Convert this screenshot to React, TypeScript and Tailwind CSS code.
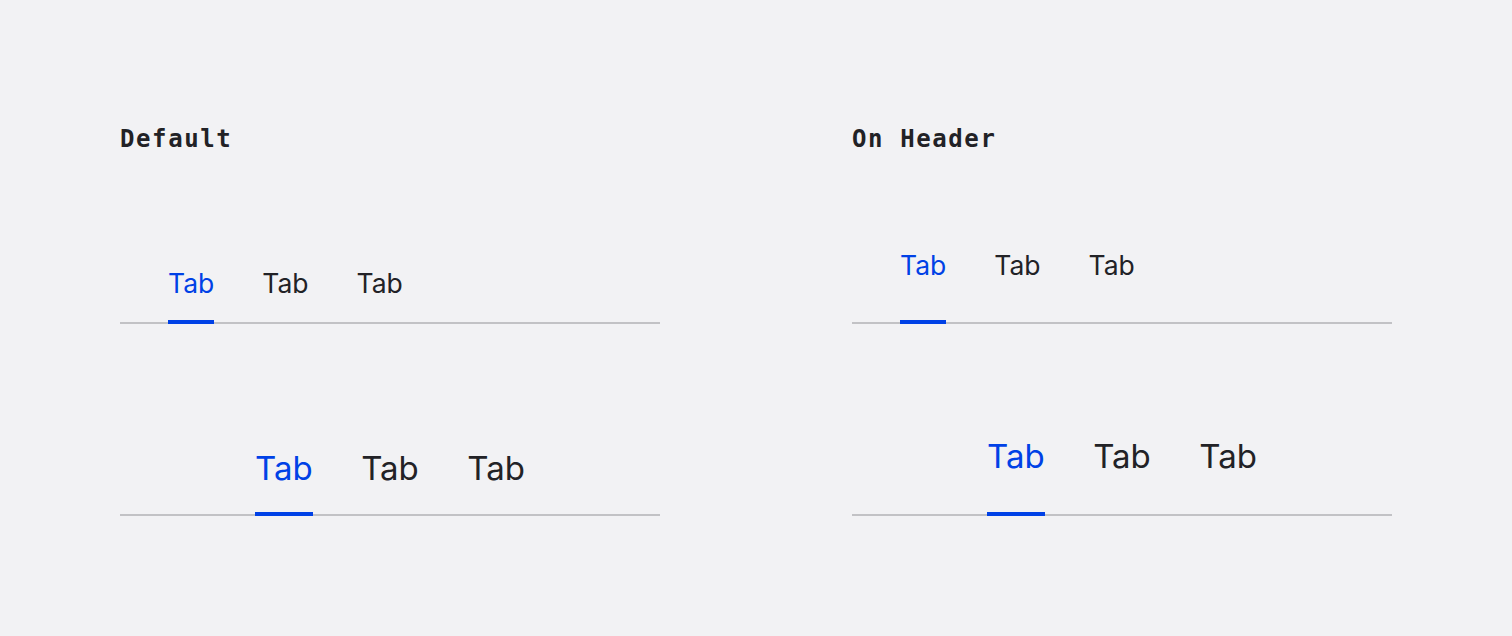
import * as React from "react";

type Size = "md" | "lg";

interface TabBarProps {
  labels: string[];
  active: number;
  size: Size;
  onHeader?: boolean;
}

/** Row of text tabs sitting on a thin rule, active one gets a blue bar. */
function TabBar({ labels, active, size, onHeader = false }: TabBarProps) {
  const lg = size === "lg";
  const textCls = lg
    ? "text-[33px] leading-[40px]"
    : "text-[26.5px] leading-[32px]";
  const padCls = onHeader
    ? lg
      ? "pb-[38px]"
      : "pb-[41px]"
    : lg
      ? "pb-[26px]"
      : "pb-[23px]";

  return (
    <div
      className={`flex border-b-2 border-[#c2c2c5] ${
        lg ? "gap-[48.5px] pl-[135px]" : "gap-[48px] pl-[48px]"
      }`}
    >
      {labels.map((label, i) => {
        const isActive = i === active;
        return (
          <button
            key={i}
            type="button"
            className={`relative ${padCls} ${textCls} font-normal ${
              isActive ? "text-[#0041e6]" : "text-[#222226]"
            }`}
          >
            {label}
            {isActive && (
              <span className="absolute left-0 right-0 -bottom-[2px] h-[4px] bg-[#0041e6]" />
            )}
          </button>
        );
      })}
    </div>
  );
}

function Section({ title, onHeader }: { title: string; onHeader?: boolean }) {
  const tabs = ["Tab", "Tab", "Tab"];
  return (
    <div className="w-[540px] flex flex-col">
      <h2 className="h-[28px] text-[24px] leading-[28px] font-bold tracking-[1.6px] text-[#222226] [font-family:'DejaVu_Sans_Mono',monospace]">
        {title}
      </h2>
      <div className="h-[171px] flex flex-col justify-end">
        <TabBar labels={tabs} active={0} size="md" onHeader={onHeader} />
      </div>
      <div className="h-[192px] flex flex-col justify-end">
        <TabBar labels={tabs} active={0} size="lg" onHeader={onHeader} />
      </div>
    </div>
  );
}

export default function App() {
  return (
    <div className="min-h-[636px] w-full bg-[#f2f2f4] [font-family:Inter,'Noto_Sans',sans-serif]">
      <div className="flex justify-center gap-[192px] pt-[125px]">
        <Section title="Default" />
        <Section title="On Header" onHeader />
      </div>
    </div>
  );
}
